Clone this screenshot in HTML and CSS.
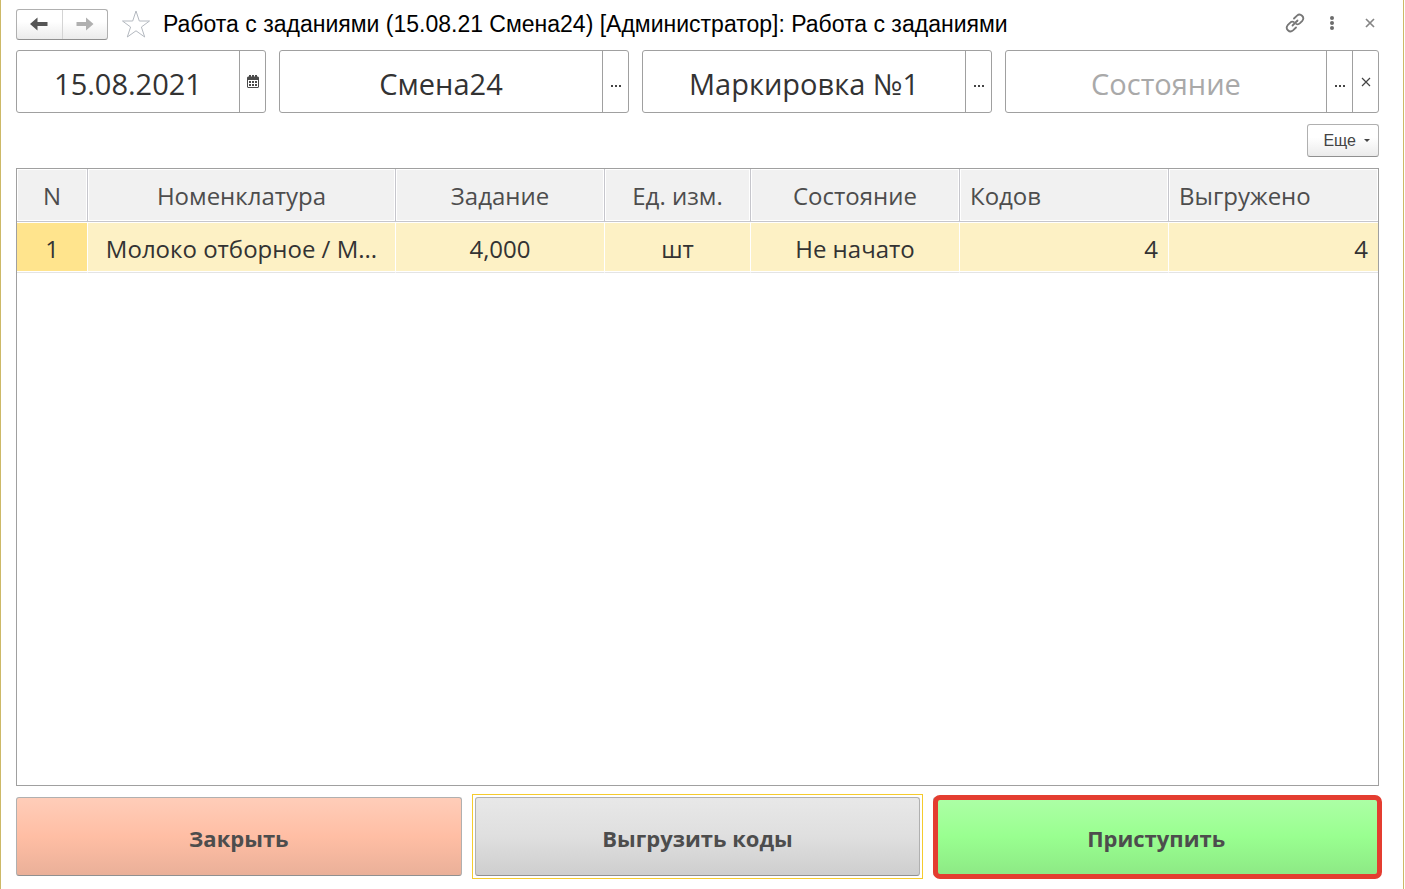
FILE: index.html
```html
<!DOCTYPE html>
<html lang="ru">
<head>
<meta charset="utf-8">
<meta name="viewport" content="width=device-width, initial-scale=1">
<title>Работа с заданиями</title>
<link rel="stylesheet" href="styles.css">
</head>
<body>
<main class="window">
  <header class="titlebar">
    <div class="history">
      <button class="history-btn" type="button" aria-label="Назад">
        <svg width="18" height="14" viewBox="0 0 18 14"><path d="M0 7 7.500 0.500V5H17.500V9H7.500V13.500Z" fill="#555"/></svg>
      </button>
      <button class="history-btn" type="button" aria-label="Вперед">
        <svg width="18" height="14" viewBox="0 0 18 14"><path d="M17.500 7 10 0.500V5H0.500V9H10V13.500Z" fill="#b0b0b0"/></svg>
      </button>
    </div>
    <button class="icon-btn star" type="button" aria-label="Избранное">
      <svg width="30" height="30" viewBox="0 0 30 30"><path d="M15 2 18.300 12H28.500L20.400 18 23.700 28 15 21.800 6.300 28 9.600 18 1.500 12H11.700Z" fill="none" stroke="#b4b9c0"/></svg>
    </button>
    <h1 class="title">Работа с заданиями (15.08.21 Смена24) [Администратор]: Работа с заданиями</h1>
    <div class="tools">
      <button class="icon-btn" type="button" aria-label="Ссылка">
        <svg width="20" height="20" viewBox="0 0 20 20" fill="none" stroke="#777" stroke-width="1.800" stroke-linecap="round"><path d="M7.500 12.500 12.500 7.500"/><path d="M9 5.500 12 2.600C15.500-.3 20.200 4.200 17.300 7.800L15 10.200C13.800 11.300 12.400 11.500 11.300 11"/><path d="M11 14.500 8 17.400C4.500 20.300-.2 15.800 2.700 12.200L5 9.800C6.200 8.700 7.600 8.500 8.700 9"/></svg>
      </button>
      <button class="icon-btn" type="button" aria-label="Меню">
        <svg width="6" height="16" viewBox="0 0 6 16" fill="#6c6c6c"><circle cx="3" cy="3" r="2"/><circle cx="3" cy="8" r="2"/><circle cx="3" cy="13" r="2"/></svg>
      </button>
      <button class="icon-btn close" type="button" aria-label="Закрыть окно">
        <svg width="10" height="10" viewBox="0 0 10 10"><path d="M1 1 9 9M9 1 1 9" stroke="#858585" stroke-width="1.700"/></svg>
      </button>
    </div>
  </header>

  <form class="filters">
    <div class="field">
      <input class="field-input" type="text" value="15.08.2021" aria-label="Дата">
      <button class="field-btn" type="button" aria-label="Календарь">
        <svg width="12" height="13" viewBox="0 0 12 13"><path fill="#4a4a4a" d="M1 1.500H2V0H4V1.500H5V0H7V1.500H8V0H10V1.500H11L12 2.500V12L11 13H1L0 12V2.500Z"/><path fill="#fff" d="M1 5H11V12H1Z"/><path fill="#4a4a4a" d="M2 6H4V8H2ZM5 6H7V8H5ZM8 6H10V8H8ZM2 9H4V11H2ZM5 9H7V11H5ZM8 9H10V11H8Z"/></svg>
      </button>
    </div>
    <div class="field">
      <input class="field-input" type="text" value="Смена24" aria-label="Смена">
      <button class="field-btn" type="button" aria-label="Выбрать смену"><svg width="12" height="10" viewBox="0 0 12 10"><path d="M1 8H3V10H1ZM5 8H7V10H5ZM9 8H11V10H9Z" fill="#444"/></svg></button>
    </div>
    <div class="field">
      <input class="field-input" type="text" value="Маркировка №1" aria-label="Операция">
      <button class="field-btn" type="button" aria-label="Выбрать операцию"><svg width="12" height="10" viewBox="0 0 12 10"><path d="M1 8H3V10H1ZM5 8H7V10H5ZM9 8H11V10H9Z" fill="#444"/></svg></button>
    </div>
    <div class="field">
      <input class="field-input" type="text" placeholder="Состояние" aria-label="Состояние">
      <button class="field-btn" type="button" aria-label="Выбрать состояние"><svg width="12" height="10" viewBox="0 0 12 10"><path d="M1 8H3V10H1ZM5 8H7V10H5ZM9 8H11V10H9Z" fill="#444"/></svg></button>
      <button class="field-btn" type="button" aria-label="Очистить"><svg width="10" height="10" viewBox="0 0 10 10"><path d="M1 1 9 9M9 1 1 9" stroke="#444" stroke-width="1.200"/></svg></button>
    </div>
  </form>

  <div class="commands">
    <button class="more" type="button">Еще
      <svg width="6" height="3" viewBox="0 0 6 3"><path d="M0 0H6L3 3Z" fill="#444"/></svg>
    </button>
  </div>

  <section class="grid">
    <table class="tasks">
      <colgroup>
        <col class="col-n"><col class="col-item"><col class="col-mid"><col class="col-unit"><col class="col-mid"><col class="col-mid"><col class="col-mid">
      </colgroup>
      <thead>
        <tr><th>N</th><th>Номенклатура</th><th>Задание</th><th>Ед. изм.</th><th>Состояние</th><th class="start">Кодов</th><th class="start">Выгружено</th></tr>
      </thead>
      <tbody>
        <tr><td class="current">1</td><td>Молоко отборное / М...</td><td>4,000</td><td>шт</td><td>Не начато</td><td class="end">4</td><td class="end">4</td></tr>
      </tbody>
    </table>
  </section>

  <footer class="actions">
    <button class="action action-close" type="button">Закрыть</button>
    <button class="action action-export" type="button">Выгрузить коды</button>
    <button class="action action-start" type="button">Приступить</button>
  </footer>
</main>
</body>
</html>
```

FILE: styles.css
```css
* {
  box-sizing: border-box;
}

body {
  margin: 0;
  background: #fff;
  color: #333;
  font-family: "Open Sans", "Noto Sans", sans-serif;
}

button,
input {
  margin: 0;
  font: inherit;
  color: inherit;
}

svg {
  display: block;
}

.window {
  display: flex;
  flex-direction: column;
  gap: 11px;
  min-height: 100vh;
  margin-right: 1px;
  padding: 9px 24px 13px 15px;
  border: solid #cdb967;
  border-width: 0 1px;
}

.titlebar {
  display: flex;
  align-items: center;
  height: 30px;
}

.history {
  display: flex;
  width: 92px;
  height: 31px;
  border: 1px solid #b0b0b0;
  border-bottom-color: #909090;
  border-radius: 3px;
  background: linear-gradient(#fff, #fff 40%, #ebebeb);
}

.history-btn {
  display: flex;
  flex: 1;
  align-items: center;
  justify-content: center;
  padding: 0;
  border: 0;
  background: none;
}

.history-btn + .history-btn {
  border-left: 1px solid #d4d4d4;
}

.icon-btn {
  display: flex;
  padding: 0;
  border: 0;
  background: none;
}

.star {
  margin: 0 12px 0 13px;
}

.title {
  flex: 1;
  min-width: 0;
  margin: 0;
  overflow: hidden;
  color: #000;
  font: 400 23px/30px "Liberation Sans", Arial, sans-serif;
  white-space: nowrap;
}

.tools {
  display: flex;
  align-items: center;
  gap: 24px;
  padding: 0 4px 2px 0;
}

.close {
  padding-left: 6px;
}

.filters {
  display: grid;
  grid-template-columns: 250fr 350fr 350fr 374fr;
  gap: 13px;
}

.field {
  display: flex;
  min-width: 0;
  height: 63px;
  border: 1px solid #a0a0a0;
  border-radius: 3px;
}

.field-input {
  flex: 1;
  min-width: 0;
  padding: 3px 0 0;
  border: 0;
  outline: 0;
  background: none;
  font-size: 29px;
  text-align: center;
}

.field-input::placeholder {
  color: #a9a9a9;
  opacity: 1;
}

.field-btn {
  display: flex;
  flex: none;
  align-items: center;
  justify-content: center;
  width: 26px;
  padding: 0;
  border: 0;
  border-left: 1px solid #a0a0a0;
  background: none;
}

.commands {
  display: flex;
  justify-content: flex-end;
}

.more {
  display: flex;
  align-items: center;
  justify-content: flex-end;
  gap: 8px;
  width: 72px;
  height: 33px;
  padding: 0 8px 0 0;
  border: 1px solid #b0b0b0;
  border-bottom-color: #909090;
  border-radius: 3px;
  background: linear-gradient(#fff, #fff 40%, #ebebeb);
  color: #444;
  font: 16px "Liberation Sans", Arial, sans-serif;
}

.grid {
  flex: 1;
  border: 1px solid #a0a0a0;
}

.tasks {
  width: 100%;
  border-collapse: separate;
  border-spacing: 0;
  table-layout: fixed;
  font-size: 24px;
  line-height: 32px;
}

.col-n { width: 71px; }
.col-item { width: 308px; }
.col-mid { width: 209px; }
.col-unit { width: 146px; }

.tasks th,
.tasks td {
  overflow: hidden;
  font-weight: 400;
  text-align: center;
  text-overflow: ellipsis;
  white-space: nowrap;
}

.tasks th {
  height: 53px;
  padding: 2px 10px 0;
  border-right: 1px solid #c6c6cc;
  border-bottom: 1px solid #c6c6cc;
  background: #f1f1f1;
  box-shadow: inset 0 0 0 1px #fff;
  color: #4d4d4d;
}

.tasks td {
  height: 51px;
  padding: 4px 10px 0;
  border-right: 1px solid #fff;
  border-bottom: 1px solid #e4e4e4;
  background: #fdf1c5;
  box-shadow: inset 0 1px #fff, inset 0 -1px #fff;
}

.tasks th:last-child,
.tasks td:last-child {
  border-right: 0;
}

.tasks .current {
  background: #ffe48d;
}

.tasks .start {
  text-align: left;
}

.tasks .end {
  text-align: right;
}

.actions {
  display: grid;
  grid-template-columns: repeat(3, 1fr);
  gap: 13px;
}

.action {
  position: relative;
  height: 79px;
  padding: 3px 0 0;
  border: 1px solid #b0b0b0;
  border-bottom-color: #909090;
  border-radius: 3px;
  color: #4d4d4d;
  font-size: 22px;
  font-weight: 700;
}

.action-close {
  background: linear-gradient(#ffcdb9, #ffbea4 50%, #eab099);
}

.action-export {
  background: linear-gradient(#e8e8e8, #dfdfdf 50%, #cecece);
}

.action-export::after {
  position: absolute;
  inset: -4px;
  border: 1px solid #f5cb2d;
  content: "";
}

.action-start {
  background: linear-gradient(#adffa6, #99ff90 50%, #8de985);
}

.action-start::after {
  position: absolute;
  inset: -3px -4px -4px -1px;
  border: 5px solid #e43d30;
  border-radius: 7px;
  content: "";
}
```
